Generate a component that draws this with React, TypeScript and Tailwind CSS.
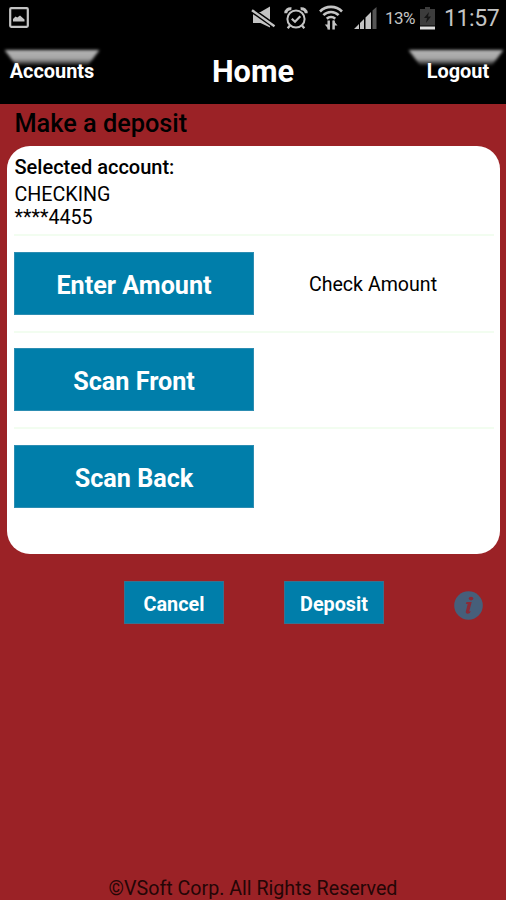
import React from 'react';

const StatusBar: React.FC = () => (
  <div className="flex h-9 items-center justify-between pr-[8px] pl-[9px] text-[#c4c4c4]">
    <svg className="-mt-[1px]" width="20" height="21" viewBox="0 0 20 21" fill="none">
      <rect x="1.2" y="1.2" width="17.600" height="18.600" rx="1" stroke="currentColor" strokeWidth="2.200" />
      <path d="M4 14.500V12l2.500-2.500 1.800 1L11 8.500l4.500 4v2z" fill="currentColor" />
    </svg>
    <div className="flex items-center">
      {/* muted */}
      <svg className="mr-[8px]" width="25" height="24" viewBox="0 0 25 24">
        <path d="M2 6h7.500L19 .5v21L9.500 17H2z" fill="currentColor" />
        <path d="M0 3.500l24 17" stroke="#000" strokeWidth="5.200" />
        <path d="M1 4.200l22.500 16" stroke="currentColor" strokeWidth="2.400" />
      </svg>
      {/* alarm */}
      <svg className="mr-[11px]" width="24" height="24" viewBox="0 0 24 24" fill="none" stroke="currentColor">
        <circle cx="12" cy="13" r="8.600" strokeWidth="2" />
        <path d="M7.800 12.800l3.200 3 5.300-5.500" strokeWidth="2.200" />
        <path d="M1.800 7.200c0-3 2.400-4.800 5.600-4.400M22.200 7.200c0-3-2.400-4.800-5.600-4.400" strokeWidth="3" />
        <path d="M6 19.500l-2.300 2.800M18 19.500l2.300 2.800" strokeWidth="2.300" />
      </svg>
      {/* wifi */}
      <svg className="-mt-[1px] mr-[11px]" width="24" height="26" viewBox="0 0 24 26" fill="none" stroke="currentColor">
        <path d="M1 6.500a15.500 15.500 0 0 1 22 0M4.400 10.200a10.700 10.700 0 0 1 15.200 0M7.800 13.700a6 6 0 0 1 8.400 0" strokeWidth="2.600" />
        <path d="M9.700 15.500v9M14.600 15.500v9" strokeWidth="2.500" />
        <path d="M5.800 19.500h4.500v5.500zM18.500 20.500H14v-5.500z" fill="currentColor" stroke="none" />
      </svg>
      {/* signal */}
      <svg className="mr-[8px]" width="23" height="23" viewBox="0 0 23 23" fill="currentColor">
        <path d="M0 22l5-5v5zM6 16l4-4v10H6zM11.500 10.500L17 5v17h-5.500z" />
        <path d="M18.500 3.500L22.500 0v22h-4z" fill="#555" />
      </svg>
      <span className="mt-[1px] mr-[5px] w-[30px] text-[17px] tracking-[-0.5px] whitespace-nowrap">13%</span>
      {/* battery */}
      <svg className="mr-[9px]" width="15" height="23" viewBox="0 0 15 23">
        <path d="M5 0h5v2h5v16.500H0V2h5z" fill="#3c3c3c" />
        <path d="M9 5l-5 6h3l-1 5 5-6.500H8z" fill="#161616" />
        <path d="M0 19.500h15V22.500H0z" fill="#dedede" />
      </svg>
      <span className="mt-[2px] w-[54px] text-[23px] tracking-[-0.4px] whitespace-nowrap">11:57</span>
    </div>
  </div>
);

const HeaderButton: React.FC<{ label: string; className: string }> = ({ label, className }) => (
  <button className={`relative h-[46px] w-[96px] pt-[1px] text-[19.900px] font-bold ${className}`}>
    <span className="absolute top-[2px] left-1/2 h-[15px] w-[95px] -translate-x-1/2 blur-[1.800px]">
      <span className="block h-full bg-linear-to-b from-[#b4b4b4] via-[#a4a4a4] via-60% to-[#202020] [clip-path:polygon(0_0,100%_0,88%_100%,12%_100%)]" />
    </span>
    <span className="relative whitespace-nowrap">{label}</span>
  </button>
);

const steps = [
  { label: 'Enter Amount', value: 'Check Amount' },
  { label: 'Scan Front', value: '' },
  { label: 'Scan Back', value: '' },
];

const App: React.FC = () => {
  return (
    <div className="flex h-[900px] w-[506px] flex-col overflow-hidden bg-[#9b2226] font-['Roboto',sans-serif] text-black">
      <div className="h-[104px] bg-black">
        <StatusBar />
        <header className="flex items-start justify-between pt-[12px] pr-[2px] pl-1 text-white">
          <HeaderButton label="Accounts" className="" />
          <h1 className="mt-[2px] -ml-[2px] text-[30.700px] leading-[44px] font-bold">Home</h1>
          <HeaderButton label="Logout" className="pl-[4px]" />
        </header>
      </div>

      <h2 className="h-[42px] pl-[14.500px] text-[25.300px] leading-[39px] font-medium">Make a deposit</h2>

      <main className="mr-[6px] ml-[7px] h-[408px] rounded-[23px] bg-white pt-[10px] pr-[6px] pl-[7px]">
        <section className="h-[78px] pl-[0.500px] text-[19.700px] leading-[23px]">
          <h3 className="mb-[4px] text-[20px] font-medium">Selected account:</h3>
          <p>CHECKING</p>
          <p>****4455</p>
        </section>
        {steps.map((step) => (
          <div key={step.label} className="flex h-[96.500px] items-center border-t-2 border-[#f2fdf0]">
            <button className="h-[63px] w-[240px] border border-[#2c8db2] bg-[#007eaa] pt-[5px] text-[25.200px] font-bold text-white">
              {step.label}
            </button>
            <span className="flex-1 pt-[2px] pr-[2px] text-center text-[19.600px]">{step.value}</span>
          </div>
        ))}
      </main>

      <div className="mt-[27px] flex items-center pl-[124px]">
        <button className="h-[43px] w-[100px] border border-[#38728f] bg-[#007eaa] pt-[4px] text-[19.800px] font-bold text-white">Cancel</button>
        <button className="ml-[60px] h-[43px] w-[100px] border border-[#38728f] bg-[#007eaa] pt-[4px] text-[19.800px] font-bold text-white">Deposit</button>
        <svg className="mt-[5px] ml-[70px]" width="29" height="29" viewBox="0 0 29 29">
          <circle cx="14.500" cy="14.500" r="14.300" fill="#465f7a" />
          <ellipse cx="17" cy="7.600" rx="2.300" ry="1.800" fill="#8b2a36" />
          <path d="M12.500 11h5.200l-2.500 9.500 1.500-.5-.8 2c-2 1-4.600 1-4.100-1.400l1.900-7.600h-1.800z" fill="#8b2a36" />
        </svg>
      </div>

      <footer className="mt-auto -mb-[1px] text-center text-[19.650px] leading-6 whitespace-nowrap text-[#250606]">
        ©VSoft Corp. All Rights Reserved
      </footer>
    </div>
  );
};

export default App;
